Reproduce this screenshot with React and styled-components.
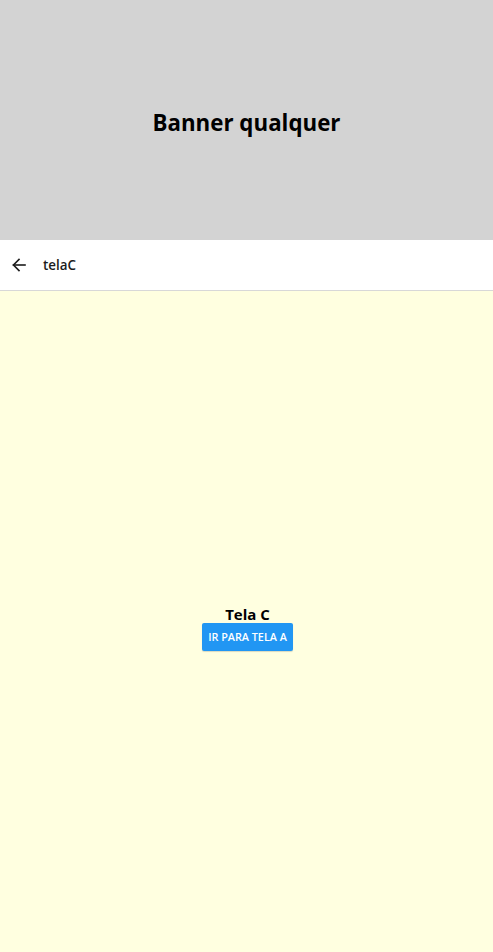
import React from "react";
import styled, { createGlobalStyle } from "styled-components";

const Global = createGlobalStyle`
  html, body { margin: 0; padding: 0; height: 100%; }
  body { font-family: "Open Sans", "Noto Sans", Arial, sans-serif; }
  #root { height: 100%; }
`;

const Page = styled.div`
  display: flex;
  flex-direction: column;
  height: 952px;
`;

const Banner = styled.div`
  height: 240px;
  background: #d3d3d3;
  display: flex;
  align-items: center;
  justify-content: center;
`;

const BannerTitle = styled.h1`
  margin: 0;
  font-size: 22.3px;
  font-weight: 700;
  color: #000;
  padding-top: 4px;
`;

const Header = styled.div`
  background: #fff;
  border-bottom: 1px solid #d8d8d8;
  display: flex;
  align-items: center;
  box-sizing: border-box;
  height: 51px;
`;

const BackButton = styled.button`
  border: none;
  background: none;
  padding: 0;
  margin-left: 10px;
  width: 18px;
  height: 18px;
  display: flex;
  align-items: center;
  justify-content: center;
  color: #1c1c1c;
`;

const HeaderTitle = styled.span`
  margin-left: 15px;
  font-size: 13.4px;
  font-weight: 600;
  color: #1c1c1c;
`;

const Content = styled.div`
  flex: 1;
  background: #ffffe0;
  display: flex;
  flex-direction: column;
  align-items: center;
  justify-content: center;
  padding-top: 12px;
`;

const ScreenTitle = styled.div`
  font-size: 15px;
  font-weight: 700;
  color: #000;
  line-height: 18px;
  margin-left: 2px;
`;

const ActionButton = styled.button`
  background: #2196f3;
  color: #fff;
  border: none;
  border-radius: 2px;
  height: 28px;
  padding: 0 6px;
  margin-left: 2px;
  font-family: "Open Sans", "Noto Sans", Arial, sans-serif;
  font-size: 10.8px;
  font-weight: 600;
  text-transform: uppercase;
  box-shadow: 0 1px 1px rgba(0,0,0,0.15);
`;

export default function App() {
  return (
    <>
      <Global />
      <Page>
        <Banner>
          <BannerTitle>Banner qualquer</BannerTitle>
        </Banner>
        <Header>
          <BackButton aria-label="voltar">
            <svg width="16" height="16" viewBox="0 0 16 16" fill="none" stroke="currentColor" strokeWidth="1.6" strokeLinecap="square">
              <path d="M14 8H2.5" />
              <path d="M8 2.5L2.5 8L8 13.5" />
            </svg>
          </BackButton>
          <HeaderTitle>telaC</HeaderTitle>
        </Header>
        <Content>
          <ScreenTitle>Tela C</ScreenTitle>
          <ActionButton>Ir para tela A</ActionButton>
        </Content>
      </Page>
    </>
  );
}
